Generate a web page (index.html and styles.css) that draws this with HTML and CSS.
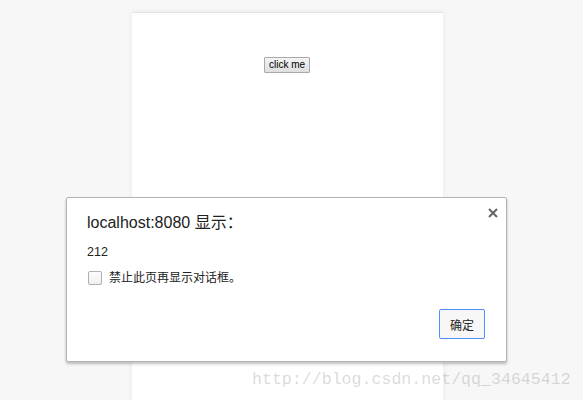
FILE: index.html
```html
<!DOCTYPE html>
<html>
<head>
<meta charset="utf-8">
<link rel="stylesheet" href="styles.css">
</head>
<body>
<div class="page">
  <div class="content">
    <button class="click-btn">click me</button>
  </div>
</div>
<div class="dialog">
  <svg class="close" width="10" height="10" viewBox="0 0 10 10"><path d="M1 1 L9 9 M9 1 L1 9" stroke="#666" stroke-width="2"/></svg>
  <div class="title">localhost:8080 显示：</div>
  <div class="message">212</div>
  <label class="check-row"><span class="checkbox"></span><span>禁止此页再显示对话框。</span></label>
  <div class="actions"><button class="ok-btn">确定</button></div>
</div>
<div class="watermark">http://blog.csdn.net/qq_34645412</div>
</body>
</html>
```
FILE: styles.css
```css
html, body {
  margin: 0;
  padding: 0;
  background: #f7f7f7;
  height: 400px;
  overflow: hidden;
  font-family: "Liberation Sans", "Noto Sans CJK SC", sans-serif;
}
.page {
  padding-top: 12px;
  padding-left: 132px;
}
.content {
  width: 311px;
  height: 400px;
  background: #fff;
  border-top: 1px solid #e4e4e4;
  box-shadow: 0 0 6px rgba(0,0,0,0.06);
  display: flex;
  justify-content: center;
  align-items: flex-start;
  padding-top: 44px;
  box-sizing: border-box;
}
.click-btn {
  font-family: "Liberation Sans", sans-serif;
  font-size: 10px;
  width: 46px;
  height: 16px;
  padding: 0;
  margin-left: -1px;
  border: 1px solid #a9a9a9;
  border-radius: 1px;
  background: linear-gradient(#f4f4f4, #dedede);
  color: #000;
  line-height: 14px;
}
.dialog {
  position: absolute;
  left: 66px;
  top: 197px;
  width: 441px;
  height: 165px;
  box-sizing: border-box;
  background: #fff;
  border: 1px solid #b4b4b4;
  border-radius: 2px;
  box-shadow: 0 2px 3px rgba(0,0,0,0.25);
  padding: 13px 21px 0 20px;
  display: flex;
  flex-direction: column;
}
.close {
  position: absolute;
  left: 421px;
  top: 10px;
}
.title {
  font-size: 16px;
  line-height: 24px;
  color: #222;
}
.message {
  margin-top: 9px;
  font-size: 12.5px;
  line-height: 16px;
  color: #222;
}
.check-row {
  margin-top: 10px;
  display: flex;
  align-items: center;
  gap: 7px;
  font-size: 12px;
  line-height: 16px;
  color: #222;
}
.checkbox {
  width: 12px;
  height: 12px;
  margin-left: 1px;
  border: 1px solid #b0b0b0;
  border-radius: 2px;
  background: linear-gradient(#fcfcfc, #f0f0f0);
}
.actions {
  display: flex;
  justify-content: flex-end;
  margin-top: 23px;
}
.ok-btn {
  width: 46px;
  height: 30px;
  padding: 0;
  border: 1px solid #4d90fe;
  border-radius: 2px;
  background: #f7f7f7;
  font-family: "Liberation Sans", "Noto Sans CJK SC", sans-serif;
  font-size: 12px;
  color: #222;
}
.watermark {
  position: absolute;
  left: 252px;
  top: 369px;
  font-family: "Liberation Mono", monospace;
  font-size: 16.6px;
  line-height: 22px;
  color: rgba(150,150,150,0.35);
  white-space: nowrap;
}
```
